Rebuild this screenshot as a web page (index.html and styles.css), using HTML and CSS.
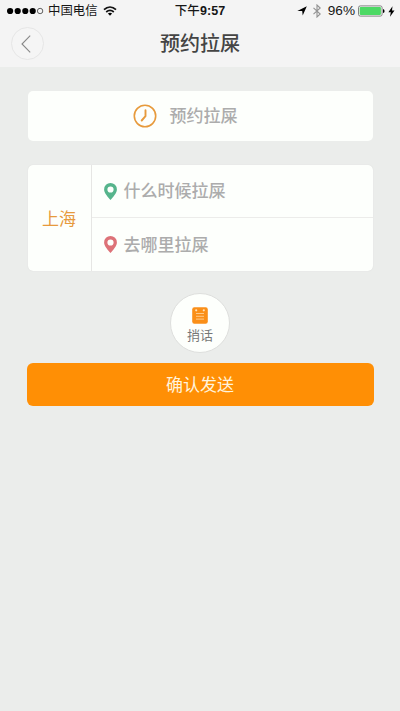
FILE: index.html
```html
<!DOCTYPE html>
<html lang="zh-CN">
<head>
<meta charset="utf-8">
<title>预约拉屎</title>
<link rel="stylesheet" href="styles.css">
</head>
<body>
<header class="header">
  <div class="status">
    <div class="status-left">
      <svg class="signal" width="37" height="8" viewBox="0 0 37 8"><circle cx="3.1" cy="4" r="3.1"/><circle cx="10.7" cy="4" r="3.1"/><circle cx="18.3" cy="4" r="3.1"/><circle cx="25.7" cy="4" r="3.1"/><circle cx="33.1" cy="4" r="2.7" fill="none" stroke="#222" stroke-width=".7"/></svg>
      <span class="carrier">中国电信</span>
      <svg class="wifi" width="14" height="10" viewBox="0 0 14 10"><path d="M1 3.7C4.6.3 9.4.3 13 3.7M3.2 6C5.5 3.9 8.5 3.9 10.8 6" fill="none" stroke="#111" stroke-width="1.7"/><path d="M4.9 7.5Q7 5.8 9.1 7.5L7 9.7Z"/></svg>
    </div>
    <div class="time">下午<b>9:57</b></div>
    <div class="status-right">
      <svg class="locate" width="10" height="10" viewBox="0 0 10 10"><path d="M9.8.3 5.7 9.5 5.2 5H.3Z"/></svg>
      <svg class="bluetooth" width="8" height="14" viewBox="0 0 8 14"><path d="M.5 3.8 7.2 10 4 13V1l3.2 3L.5 10.2" fill="none" stroke="#929292" stroke-width="1.1"/></svg>
      <span class="percent">96%</span>
      <svg class="battery" width="27" height="12" viewBox="0 0 27 12"><rect x=".5" y=".9" width="23.6" height="10.2" rx="1.8" fill="#f4f4f4" stroke="#777" stroke-width=".9"/><rect x="1.7" y="2.1" width="21.2" height="7.8" rx=".8" fill="#4cd964"/><path d="M25 3.9q1.6.3 1.6 2.1T25 8.1Z"/></svg>
      <svg class="bolt" width="7" height="11" viewBox="0 0 7 11"><path d="M4.5.3.4 6.2h2.4L2 10.7l4.5-6.1H4Z"/></svg>
    </div>
  </div>
  <div class="navbar">
    <button class="back" aria-label="返回"><svg width="10" height="18" viewBox="0 0 10 18"><path d="M9.2.7 1 9l8.2 8.3" fill="none" stroke="#888" stroke-width="1.1"/></svg></button>
    <h1 class="title">预约拉屎</h1>
  </div>
</header>
<main class="content">
  <div class="card time-card">
    <svg width="24" height="24" viewBox="0 0 24 24" fill="none" stroke="#e79a3c"><circle cx="12" cy="12" r="10.7" stroke-width="1.6"/><path d="M12.5 6.2v6L8.7 16.5" stroke-width="1.9" stroke-linecap="round" stroke-linejoin="round"/></svg>
    <span class="hint">预约拉屎</span>
  </div>
  <div class="card route-card">
    <div class="city">上海</div>
    <div class="places">
      <div class="place">
        <svg class="pin pin-green" width="13" height="17" viewBox="0 0 13 17"><path fill-rule="evenodd" d="M6.5 0A6.4 6.4 0 0 0 .1 6.4C.1 10.2 4.1 14 6.5 17c2.4-3 6.4-6.8 6.4-10.6A6.4 6.4 0 0 0 6.5 0Zm0 3.4a3.1 3.1 0 1 1 0 6.2 3.1 3.1 0 0 1 0-6.2Z"/></svg>
        <span class="hint">什么时候拉屎</span>
      </div>
      <div class="place">
        <svg class="pin pin-red" width="13" height="17" viewBox="0 0 13 17"><path fill-rule="evenodd" d="M6.5 0A6.4 6.4 0 0 0 .1 6.4C.1 10.2 4.1 14 6.5 17c2.4-3 6.4-6.8 6.4-10.6A6.4 6.4 0 0 0 6.5 0Zm0 3.4a3.1 3.1 0 1 1 0 6.2 3.1 3.1 0 0 1 0-6.2Z"/></svg>
        <span class="hint">去哪里拉屎</span>
      </div>
    </div>
  </div>
  <button class="message">
    <svg width="16" height="17" viewBox="0 0 16 17"><rect x=".2" y=".2" width="15.6" height="16.6" rx="2.2" fill="#fa8f18"/><g fill="#ffe3bb"><circle cx="4.2" cy="3.3" r="1.1"/><circle cx="11.8" cy="3.3" r="1.1"/></g><path d="M4 6.5h8M4 9.3h8M4 12.1h8" stroke="#ffd095" stroke-width=".9"/></svg>
    <span>捎话</span>
  </button>
  <button class="submit">确认发送</button>
</main>
</body>
</html>
```

FILE: styles.css
```css
* { box-sizing: border-box; }

body {
  margin: 0;
  min-height: 711px;
  background: #ebedeb;
  font-family: "Liberation Sans", "Noto Sans CJK SC", sans-serif;
}

button {
  margin: 0;
  padding: 0;
  border: 0;
  font: inherit;
}

svg { display: block; flex: none; }

.header { height: 67px; background: #f4f4f4; }

.status {
  display: grid;
  grid-template-columns: 1fr auto 1fr;
  align-items: center;
  height: 22px;
  padding: 0 5px 0 7px;
  color: #161616;
  line-height: 22px;
}

.status-left, .status-right { display: flex; align-items: center; height: 22px; }
.status-right { justify-content: flex-end; }
.carrier { margin: 0 5px 0 4px; font-size: 12.4px; }
.time { margin-right: 2px; font-size: 12.5px; font-weight: 500; letter-spacing: .1px; }
.bluetooth { margin: 0 7px 0 6px; }
.percent { margin-right: 3px; font-size: 13.6px; }
.bolt { margin-left: 3px; }

.navbar {
  display: grid;
  grid-template-columns: 1fr auto 1fr;
  height: 45px;
  padding: 0 11px;
}

.back {
  display: flex;
  align-items: center;
  justify-content: center;
  width: 33px;
  height: 33px;
  margin-top: 5px;
  padding-right: 3px;
  border: 1px solid #e6e6e6;
  border-radius: 50%;
  background: #f5f5f5;
}

.title {
  margin: 0;
  color: #444;
  font-size: 20px;
  font-weight: 500;
  line-height: 44px;
}

.content {
  display: flex;
  flex-direction: column;
  align-items: center;
  padding-top: 24px;
}

.card {
  display: flex;
  width: 345px;
  border-radius: 5px;
  background: #fdfffc;
}

.hint {
  padding-top: 2px;
  color: #acacac;
  font-size: 17px;
  font-weight: 500;
  line-height: 24px;
}

.time-card {
  align-items: center;
  height: 50px;
  padding-left: 105px;
  gap: 13px;
}

.route-card {
  height: 106px;
  margin-top: 24px;
  box-shadow: 0 0 1px #cfcfcf;
}

.city {
  display: flex;
  align-items: center;
  justify-content: center;
  width: 64px;
  padding-bottom: 2px;
  border-right: 1px solid #e6e6e4;
  color: #e79a3c;
  font-size: 17px;
}

.places { display: grid; flex: 1; grid-template-rows: 52px 54px; }

.place {
  display: flex;
  align-items: center;
  padding-left: 12px;
  gap: 7px;
}

.place + .place { border-top: 1px solid #ececea; }
.pin-green { fill: #56b48c; }
.pin-red { fill: #dd7278; }

.message {
  display: flex;
  flex-direction: column;
  align-items: center;
  width: 60px;
  height: 60px;
  margin-top: 22px;
  padding-top: 13px;
  border: 1px solid #dedfdd;
  border-radius: 50%;
  background: #fdfffc;
  color: #777;
  font-size: 13px;
  line-height: 23px;
}

.submit {
  width: 347px;
  height: 43px;
  margin-top: 10px;
  padding-top: 2px;
  border-radius: 6px;
  background: #ff8f05;
  color: #fff3dc;
  font-size: 17px;
  line-height: 41px;
}
```
